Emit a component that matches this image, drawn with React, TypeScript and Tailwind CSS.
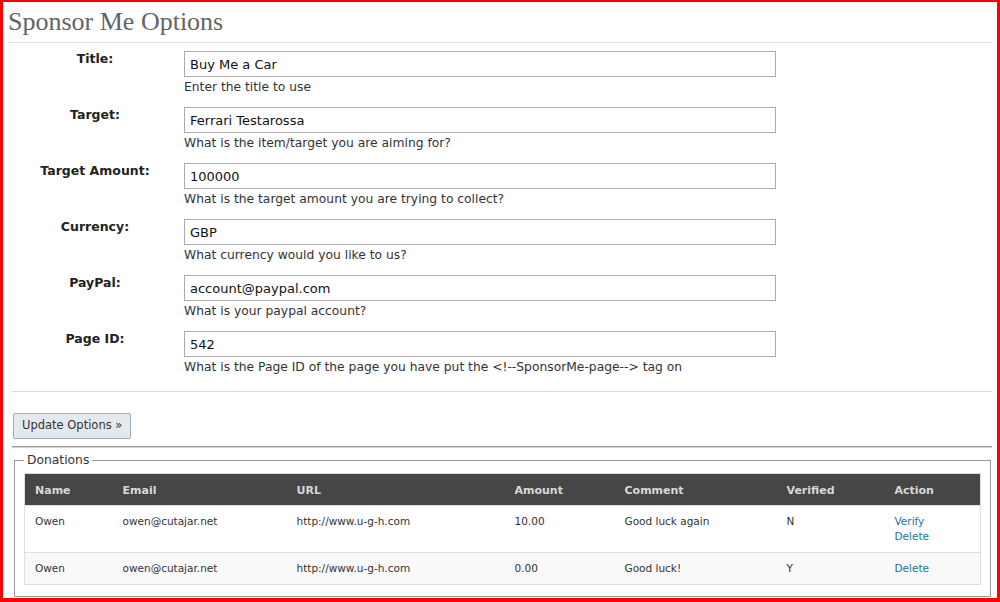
const fields = [
  { label: "Title:", value: "Buy Me a Car", help: "Enter the title to use" },
  { label: "Target:", value: "Ferrari Testarossa", help: "What is the item/target you are aiming for?" },
  { label: "Target Amount:", value: "100000", help: "What is the target amount you are trying to collect?" },
  { label: "Currency:", value: "GBP", help: "What currency would you like to us?" },
  { label: "PayPal:", value: "account@paypal.com", help: "What is your paypal account?" },
  {
    label: "Page ID:",
    value: "542",
    help: "What is the Page ID of the page you have put the <!--SponsorMe-page--> tag on",
  },
];

const donations = [
  {
    name: "Owen",
    email: "owen@cutajar.net",
    url: "http://www.u-g-h.com",
    amount: "10.00",
    comment: "Good luck again",
    verified: "N",
    actions: ["Verify", "Delete"],
  },
  {
    name: "Owen",
    email: "owen@cutajar.net",
    url: "http://www.u-g-h.com",
    amount: "0.00",
    comment: "Good luck!",
    verified: "Y",
    actions: ["Delete"],
  },
];

const columns = [
  { title: "Name", width: "w-[88px]" },
  { title: "Email", width: "w-[174px]" },
  { title: "URL", width: "w-[218px]" },
  { title: "Amount", width: "w-[110px]" },
  { title: "Comment", width: "w-[162px]" },
  { title: "Verified", width: "w-[108px]" },
  { title: "Action", width: "w-[96px]" },
];

const App = () => {
  return (
    <div className="w-[1000px] h-[602px] overflow-hidden bg-white border-solid border-[#f00] border-t-2 border-l-[3px] border-r-[3px] border-b-4 font-['DejaVu_Sans',sans-serif] text-[#333]">
      <div className="px-[5px]">
        <h1 className="pt-[5px] pb-[6px] border-b border-[#dfdfdf] font-['Liberation_Serif',serif] text-[26px] leading-[29px] text-[#646464] font-normal">
          Sponsor Me Options
        </h1>

        <div className="mt-[8px]">
          {fields.map((f) => (
            <div key={f.label} className="flex mb-[12px]">
              <div className="w-[174px] text-center text-[12.5px] leading-[16px] font-bold text-[#222]">
                {f.label}
              </div>
              <div className="ml-[2px] flex flex-col">
                <input
                  type="text"
                  defaultValue={f.value}
                  className="w-[592px] h-[26px] border border-[#aaa] bg-white px-[5px] text-[13px] text-[#111] outline-none"
                />
                <p className="mt-[2px] text-[12.3px] leading-[16px] text-[#333]">{f.help}</p>
              </div>
            </div>
          ))}
        </div>

        <div className="mt-[16px] ml-[4px] border-t border-[#dcdcdc]" />

        <button
          type="button"
          className="mt-[21px] ml-[5px] w-[118px] h-[26px] rounded-[2px] border border-[#9fadb8] bg-[#e4e9ed] text-left pl-[8px] text-[11.5px] text-[#333]"
        >
          Update Options »
        </button>

        <div className="mt-[7px] ml-[4px] border-t border-b border-t-[#999] border-b-[#d6d6d6]" />

        <fieldset className="mt-[4px] ml-[6px] w-[976px] border border-[#9a9a9a] px-[9px] pt-[5px] pb-[11px]">
          <legend className="px-[3px] text-[12.3px] leading-[16px] text-[#333]">Donations</legend>
          <table className="w-[956px] table-fixed border-collapse border border-[#dfdfdf] text-left">
            <thead>
              <tr className="bg-[#464646]">
                {columns.map((c) => (
                  <th
                    key={c.title}
                    className={`${c.width} pl-[10px] pt-[9px] pb-[7px] text-[11px] leading-[15px] font-bold text-[#d8d8d8]`}
                  >
                    {c.title}
                  </th>
                ))}
              </tr>
            </thead>
            <tbody>
              {donations.map((d, i) => (
                <tr
                  key={i}
                  className={`border-t border-[#dfdfdf] align-top text-[10.5px] leading-[15px] text-[#333] ${
                    i % 2 === 1 ? "bg-[#f9f9f9]" : "bg-white"
                  }`}
                >
                  <td className="pl-[10px] py-[8px]">{d.name}</td>
                  <td className="pl-[10px] py-[8px]">{d.email}</td>
                  <td className="pl-[10px] py-[8px]">{d.url}</td>
                  <td className="pl-[10px] py-[8px]">{d.amount}</td>
                  <td className="pl-[10px] py-[8px]">{d.comment}</td>
                  <td className="pl-[10px] py-[8px]">{d.verified}</td>
                  <td className="pl-[10px] py-[8px]">
                    {d.actions.map((a) => (
                      <div key={a}>
                        <a href="#" className="text-[#21759b]">
                          {a}
                        </a>
                      </div>
                    ))}
                  </td>
                </tr>
              ))}
            </tbody>
          </table>
        </fieldset>
      </div>
    </div>
  );
};

export default App;
